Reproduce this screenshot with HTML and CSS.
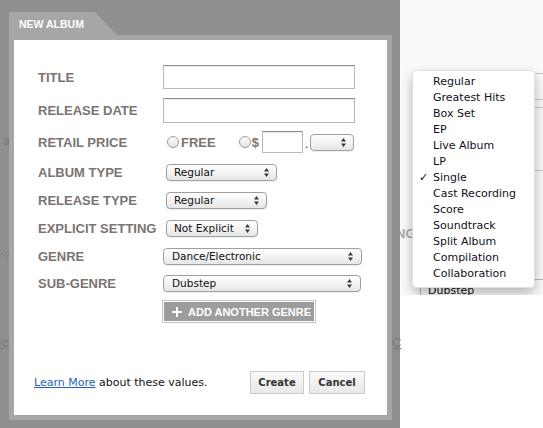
FILE: index.html
```html
<!DOCTYPE html>
<html>
<head>
  <meta charset="utf-8">
  <title>New Album</title>
  <link rel="stylesheet" href="styles.css">
</head>
<body>
  <div class="backdrop">
    <!-- bits of the page behind the overlay -->
    <span class="ghost ghost-a">a</span>
    <span class="ghost ghost-hatch"></span>
    <span class="ghost ghost-rc">rc</span>
    <span class="ghost ghost-c">C</span>

    <div class="dialog">
      <div class="tab">NEW ALBUM</div>
      <div class="frame">
        <div class="panel">
          <div class="form">
            <div class="row row-title">
              <div class="label">TITLE</div>
              <input class="text wide" type="text">
            </div>
            <div class="row row-date">
              <div class="label">RELEASE DATE</div>
              <input class="text wide tall" type="text">
            </div>
            <div class="row row-price">
              <div class="label">RETAIL PRICE</div>
              <span class="radio first"></span>
              <span class="radio-text">FREE</span>
              <span class="radio second"></span>
              <span class="radio-text dollar">$</span>
              <input class="text price" type="text">
              <span class="dot">.</span>
              <div class="select cents"><span></span><svg class="arrows" width="5" height="9" viewBox="0 0 5 9"><path d="M0 3.5L2.5 0L5 3.5Z M0 5.5L2.5 9L5 5.5Z"/></svg></div>
            </div>
            <div class="row row-select first-select">
              <div class="label">ALBUM TYPE</div>
              <div class="select album-type"><span>Regular</span><svg class="arrows" width="5" height="9" viewBox="0 0 5 9"><path d="M0 3.5L2.5 0L5 3.5Z M0 5.5L2.5 9L5 5.5Z"/></svg></div>
            </div>
            <div class="row row-select">
              <div class="label">RELEASE TYPE</div>
              <div class="select release-type"><span>Regular</span><svg class="arrows" width="5" height="9" viewBox="0 0 5 9"><path d="M0 3.5L2.5 0L5 3.5Z M0 5.5L2.5 9L5 5.5Z"/></svg></div>
            </div>
            <div class="row row-select">
              <div class="label">EXPLICIT SETTING</div>
              <div class="select explicit"><span>Not Explicit</span><svg class="arrows" width="5" height="9" viewBox="0 0 5 9"><path d="M0 3.5L2.5 0L5 3.5Z M0 5.5L2.5 9L5 5.5Z"/></svg></div>
            </div>
            <div class="row row-select">
              <div class="label">GENRE</div>
              <div class="select genre"><span>Dance/Electronic</span><svg class="arrows" width="5" height="9" viewBox="0 0 5 9"><path d="M0 3.5L2.5 0L5 3.5Z M0 5.5L2.5 9L5 5.5Z"/></svg></div>
            </div>
            <div class="row row-select row-sub">
              <div class="label">SUB-GENRE</div>
              <div class="select genre sub"><span>Dubstep</span><svg class="arrows" width="5" height="9" viewBox="0 0 5 9"><path d="M0 3.5L2.5 0L5 3.5Z M0 5.5L2.5 9L5 5.5Z"/></svg></div>
            </div>
            <div class="row row-add">
              <div class="add-btn">
                <svg width="10" height="10" viewBox="0 0 10 10"><path d="M5 0V10M0 5H10" stroke="#fff" stroke-width="2"/></svg>
                <span>ADD ANOTHER GENRE</span>
              </div>
            </div>
          </div>

          <div class="footer">
            <div class="note"><a href="#">Learn More</a> about these values.</div>
            <div class="actions">
              <div class="btn create">Create</div>
              <div class="btn cancel">Cancel</div>
            </div>
          </div>
        </div>
      </div>
    </div>
  </div>

  <div class="page">
    <div class="page-top">
      <span class="ghost-ng">NG</span>
      <span class="ghost-line l1"></span>
      <span class="ghost-line l2"></span>
      <span class="ghost-line l3"></span>
      <span class="ghost-line l4"></span>
      <div class="ghost-select">Dubstep</div>

      <!-- open album type menu -->
      <div class="menu">
        <div class="item">Regular</div>
        <div class="item">Greatest Hits</div>
        <div class="item">Box Set</div>
        <div class="item">EP</div>
        <div class="item">Live Album</div>
        <div class="item">LP</div>
        <div class="item checked">Single</div>
        <div class="item">Cast Recording</div>
        <div class="item">Score</div>
        <div class="item">Soundtrack</div>
        <div class="item">Split Album</div>
        <div class="item">Compilation</div>
        <div class="item">Collaboration</div>
      </div>
    </div>
  </div>
</body>
</html>
```

FILE: styles.css
```css
body {
  margin: 0;
  display: flex;
  width: 543px;
  height: 428px;
  overflow: hidden;
  background-color: #ffffff;
  font-family: "Liberation Sans", Arial, sans-serif;
}

.backdrop {
  position: relative;
  width: 400px;
  flex: none;
  background-color: #8f8f8f;
  padding: 12px 0 0 9px;
  box-sizing: border-box;
}

.ghost {
  position: absolute;
  color: #7b7b7b;
  font-size: 13px;
}

.ghost-a {
  left: 3px;
  top: 133px;
  font-weight: bold;
}

.ghost-hatch {
  left: 0;
  top: 250px;
  width: 9px;
  height: 8px;
  background: repeating-linear-gradient(135deg, #838383 0 1px, transparent 1px 3px);
}

.ghost-rc {
  left: -2px;
  top: 335px;
  text-decoration: underline;
}

.ghost-c {
  left: 392px;
  top: 335px;
  text-decoration: underline;
}

.dialog {
  position: relative;
  width: 383px;
}

.tab {
  width: 108px;
  height: 23px;
  background-color: #a7a5a5;
  clip-path: polygon(0 0, 86px 0, 108px 23px, 0 23px);
  color: #ffffff;
  font-weight: bold;
  font-size: 10.5px;
  line-height: 24px;
  padding-left: 10px;
  box-sizing: border-box;
}

.frame {
  background-color: #a7a5a5;
  padding: 5px;
  height: 385px;
  box-sizing: border-box;
}

.panel {
  background-color: #ffffff;
  height: 100%;
  display: flex;
  flex-direction: column;
  padding: 25px 22px 21px 20px;
  box-sizing: border-box;
}

.form {
  padding-left: 4px;
}

.row {
  display: flex;
  align-items: center;
}

.label {
  width: 125px;
  flex: none;
  font-size: 13px;
  font-weight: bold;
  color: #7a7472;
}

.row-title {
  height: 24px;
}

.row-date {
  height: 25px;
  margin-top: 9px;
}

.row-price {
  height: 26px;
  margin-top: 6px;
}

.row-select {
  height: 28px;
}

.first-select {
  margin-top: 3px;
}

.row-sub {
  height: 26px;
}

.row-add {
  margin-top: 4px;
  padding-left: 124px;
}

.text {
  height: 24px;
  border: 1px solid #b9b9b9;
  border-top-color: #8c8c8c;
  box-shadow: inset 0 1px 1px rgba(0, 0, 0, 0.08);
  box-sizing: border-box;
  margin: 0;
  padding: 0 4px;
  background-color: #ffffff;
}

.wide {
  width: 192px;
}

.tall {
  height: 25px;
}

.price {
  width: 41px;
  height: 22px;
  margin-left: 3px;
}

.radio {
  width: 12px;
  height: 12px;
  border-radius: 50%;
  border: 1px solid #9d9d9d;
  background: linear-gradient(#ffffff, #e4e4e4);
  box-sizing: border-box;
}

.radio.first {
  margin-left: 4px;
}

.radio.second {
  margin-left: 23px;
}

.radio-text {
  margin-left: 2px;
  font-size: 13px;
  font-weight: bold;
  color: #7a7472;
}

.dollar {
  margin-left: 1px;
}

.dot {
  margin: 4px 2px 0 2px;
  font-size: 12px;
  color: #333333;
}

.select {
  display: flex;
  align-items: center;
  justify-content: space-between;
  height: 17px;
  box-sizing: border-box;
  border: 1px solid #9f9f9f;
  border-radius: 4px;
  background: linear-gradient(#ffffff, #f3f3f3 50%, #e6e6e6);
  box-shadow: 0 1px 0 rgba(0, 0, 0, 0.06);
  padding: 0 7px 0 7px;
  font-family: "DejaVu Sans", Verdana, sans-serif;
  font-size: 10.5px;
  color: #111111;
}

.arrows {
  fill: #3a3a3a;
  flex: none;
}

.cents {
  width: 44px;
}

.album-type {
  width: 111px;
  margin-left: 3px;
}

.release-type {
  width: 101px;
  margin-left: 3px;
}

.explicit {
  width: 92px;
  margin-left: 3px;
}

.genre {
  width: 199px;
  padding-left: 8px;
  padding-right: 8px;
}

.genre.sub {
  width: 198px;
}

.add-btn {
  display: flex;
  align-items: center;
  gap: 6px;
  width: 154px;
  height: 23px;
  box-sizing: border-box;
  background-color: #9d9d9d;
  border: 1px solid #c4c4c4;
  box-shadow: inset 0 0 0 1px #ffffff;
  color: #ffffff;
  font-weight: bold;
  font-size: 11px;
  padding-left: 9px;
}

.footer {
  margin-top: auto;
  display: flex;
  align-items: center;
}

.note {
  font-family: "DejaVu Sans", Verdana, sans-serif;
  font-size: 11px;
  color: #111111;
}

.note a {
  color: #1f5fd0;
  text-decoration: underline;
}

.actions {
  margin-left: auto;
  display: flex;
  gap: 5px;
}

.btn {
  height: 23px;
  box-sizing: border-box;
  border: 1px solid #cbcbcb;
  background: linear-gradient(#f9f9f9, #e9e9e9);
  font-family: "DejaVu Sans", Verdana, sans-serif;
  font-weight: bold;
  font-size: 10px;
  color: #333333;
  display: flex;
  align-items: center;
  justify-content: center;
}

.create {
  width: 54px;
}

.cancel {
  width: 56px;
}

.page {
  flex: 1;
  background-color: #ffffff;
}

.page-top {
  position: relative;
  height: 295px;
  background-color: #fafafa;
  overflow: hidden;
}

.ghost-ng {
  position: absolute;
  left: -4px;
  top: 226px;
  font-size: 13px;
  font-weight: bold;
  color: #aaaaaa;
}

.ghost-line {
  position: absolute;
  left: 135px;
  width: 10px;
  height: 1px;
  background-color: #c8c8c8;
}

.l1 { top: 73px; }
.l2 { top: 99px; }
.l3 { top: 107px; }
.l4 { top: 170px; }

.ghost-select {
  position: absolute;
  left: 20px;
  top: 279px;
  width: 140px;
  height: 22px;
  border: 1px solid #b5b5b5;
  border-radius: 3px;
  padding: 4px 0 0 7px;
  box-sizing: border-box;
  font-family: "DejaVu Sans", Verdana, sans-serif;
  font-size: 11px;
  color: #111111;
}

.menu {
  position: absolute;
  left: 12px;
  top: 70px;
  width: 123px;
  padding: 3px 0 5px;
  background-color: rgba(255, 255, 255, 0.97);
  border: 1px solid rgba(0, 0, 0, 0.12);
  border-radius: 5px;
  box-shadow: 0 5px 12px rgba(0, 0, 0, 0.28);
  box-sizing: border-box;
  font-family: "DejaVu Sans", Verdana, sans-serif;
  font-size: 11px;
  color: #111122;
}

.item {
  position: relative;
  height: 16px;
  line-height: 16px;
  padding-left: 20px;
}

.item.checked::before {
  content: "\2713";
  position: absolute;
  left: 6px;
  font-weight: bold;
}
```
